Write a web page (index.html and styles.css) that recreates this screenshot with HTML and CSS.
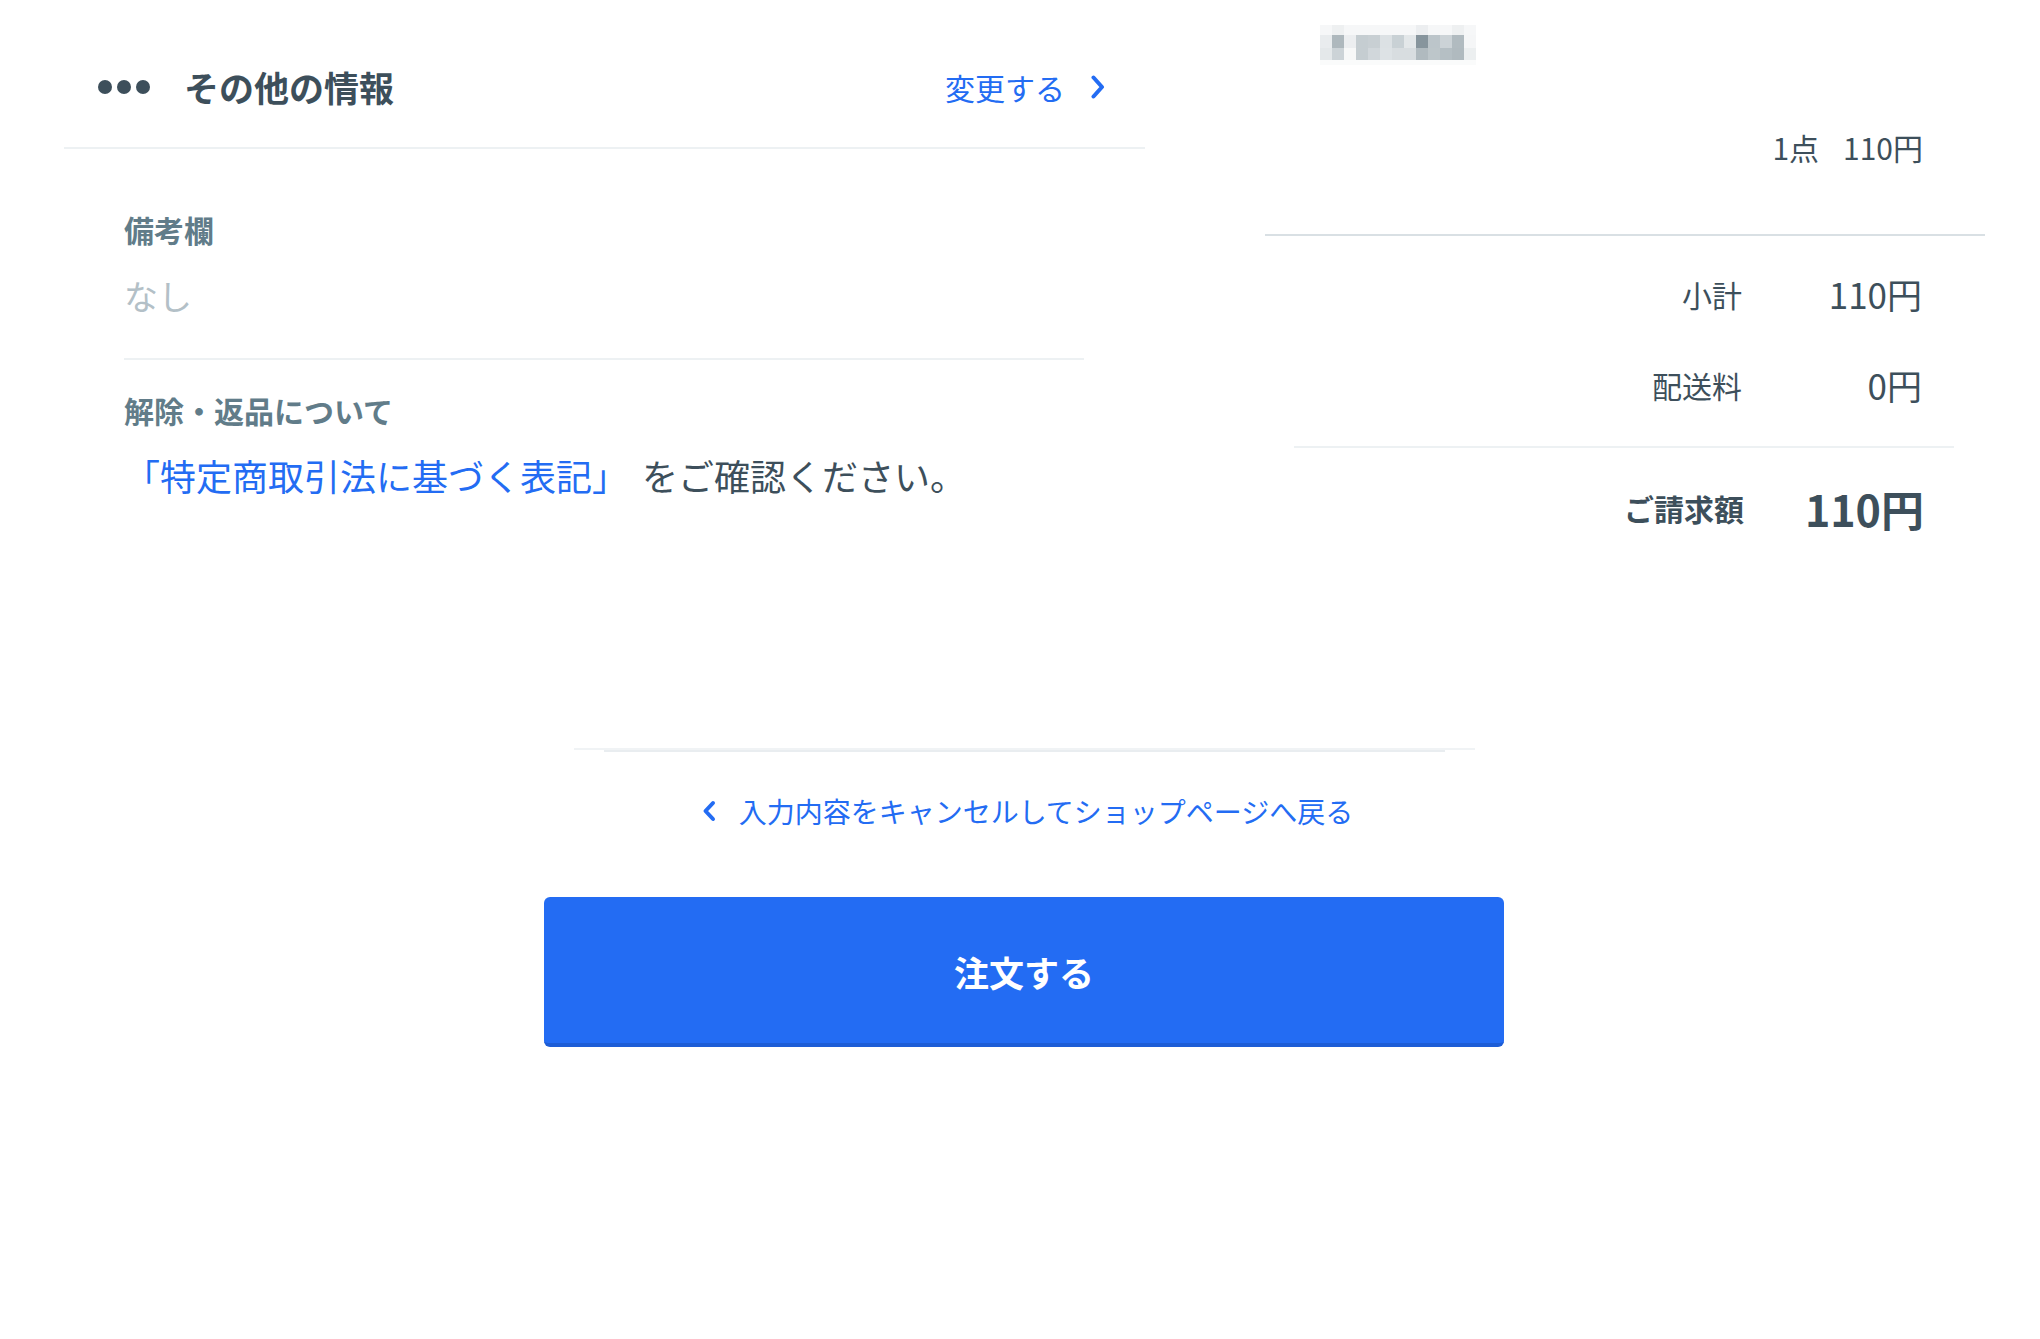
FILE: index.html
```html
<!DOCTYPE html>
<html lang="ja">
<head>
<meta charset="utf-8">
<title>注文確認</title>
<link rel="stylesheet" href="styles.css">
</head>
<body>
<div class="page">
  <div class="top">
    <section class="left">
      <header class="sec-head">
        <div class="head-title">
          <span class="dots"><i></i><i></i><i></i></span>
          <h2 class="title">その他の情報</h2>
        </div>
        <a class="change" href="#">変更する
          <svg class="chev-r" width="14" height="24" viewBox="0 0 14 24"><path d="M2.5 2.5 L11 12 L2.5 21.5" fill="none" stroke="#236cf3" stroke-width="4" stroke-linecap="round" stroke-linejoin="round"/></svg>
        </a>
      </header>
      <div class="sec-body">
        <div class="field">
          <div class="label">備考欄</div>
          <div class="empty">なし</div>
        </div>
        <div class="field field-last">
          <div class="label">解除・返品について</div>
          <p class="notice"><a class="law" href="#">「特定商取引法に基づく表記」</a>をご確認ください。</p>
        </div>
      </div>
    </section>
    <aside class="right">
      <div class="thumb">
        <svg width="156" height="40" viewBox="0 0 156 40">
          <g>
            <rect x="0" y="0" width="156" height="10" fill="#f6f7f8"/>
            <rect x="12" y="0" width="12" height="10" fill="#eef0f1"/>
            <rect x="96" y="0" width="12" height="10" fill="#eceef0"/>
            <rect x="132" y="0" width="12" height="10" fill="#eef0f1"/>
            <rect x="0" y="10" width="12" height="13" fill="#e9ecee"/>
            <rect x="12" y="10" width="12" height="13" fill="#aeb8bd"/>
            <rect x="24" y="10" width="12" height="13" fill="#eceef0"/>
            <rect x="36" y="10" width="12" height="13" fill="#c5cdd1"/>
            <rect x="48" y="10" width="12" height="13" fill="#c8cfd3"/>
            <rect x="60" y="10" width="12" height="13" fill="#dce1e4"/>
            <rect x="72" y="10" width="12" height="13" fill="#c9d1d5"/>
            <rect x="84" y="10" width="12" height="13" fill="#e3e7e9"/>
            <rect x="96" y="10" width="12" height="13" fill="#87959d"/>
            <rect x="108" y="10" width="12" height="13" fill="#bcc5ca"/>
            <rect x="120" y="10" width="12" height="13" fill="#ccd3d7"/>
            <rect x="132" y="10" width="12" height="13" fill="#b1bbc0"/>
            <rect x="144" y="10" width="12" height="13" fill="#f5f6f7"/>
            <rect x="0" y="23" width="12" height="12" fill="#e4e8ea"/>
            <rect x="12" y="23" width="12" height="12" fill="#ccd3d7"/>
            <rect x="24" y="23" width="12" height="12" fill="#f7f8f8"/>
            <rect x="36" y="23" width="12" height="12" fill="#c5cdd1"/>
            <rect x="48" y="23" width="12" height="12" fill="#d1d7db"/>
            <rect x="60" y="23" width="12" height="12" fill="#dde2e5"/>
            <rect x="72" y="23" width="12" height="12" fill="#d8dde0"/>
            <rect x="84" y="23" width="12" height="12" fill="#d8dde0"/>
            <rect x="96" y="23" width="12" height="12" fill="#b0babf"/>
            <rect x="108" y="23" width="12" height="12" fill="#bdc6ca"/>
            <rect x="120" y="23" width="12" height="12" fill="#b5bfc4"/>
            <rect x="132" y="23" width="12" height="12" fill="#b0babf"/>
            <rect x="144" y="23" width="12" height="12" fill="#eceff0"/>
            <rect x="0" y="35" width="156" height="5" fill="#fafbfb"/>
          </g>
        </svg>
      </div>
      <div class="qty"><span>1点</span><span>110円</span></div>
      <div class="rows">
        <div class="row"><span class="k">小計</span><span class="v">110円</span></div>
        <div class="row row2"><span class="k">配送料</span><span class="v">0円</span></div>
      </div>
      <div class="row total"><span class="k">ご請求額</span><span class="v">110円</span></div>
    </aside>
  </div>
  <div class="bottom">
    <div class="rule"></div>
    <a class="back" href="#">
      <svg class="chev-l" width="16" height="22" viewBox="0 0 16 22"><path d="M12 3 L4.5 11 L12 19" fill="none" stroke="#236cf3" stroke-width="4" stroke-linecap="round" stroke-linejoin="round"/></svg>
      入力内容をキャンセルしてショップページへ戻る
    </a>
    <button class="order" type="button">注文する</button>
  </div>
</div>
</body>
</html>
```

FILE: styles.css
```css
* { box-sizing: border-box; }
html, body { margin: 0; padding: 0; background: #ffffff; }
body {
  font-family: "Noto Sans CJK JP", "Noto Sans", sans-serif;
  color: #3d4f5b;
  width: 2040px;
  height: 1339px;
  overflow: hidden;
}
a { text-decoration: none; }

.top {
  display: flex;
  align-items: flex-start;
  padding-left: 64px;
}

/* ---------- left column ---------- */
.left {
  width: 1081px;
}
.sec-head {
  display: flex;
  align-items: center;
  justify-content: space-between;
  height: 149px;
  padding: 60px 40px 33px 34px;
  border-bottom: 2px solid #edf1f3;
}
.head-title {
  display: flex;
  align-items: center;
  gap: 34px;
}
.dots {
  display: flex;
  gap: 5px;
}
.dots i {
  display: block;
  width: 14px;
  height: 14px;
  border-radius: 50%;
  background: #3d4f5b;
}
.title {
  margin: 0;
  font-size: 35px;
  line-height: 54px;
  font-weight: 700;
  color: #3d4f5b;
}
.change {
  display: flex;
  align-items: center;
  gap: 26px;
  font-size: 30px;
  line-height: 54px;
  color: #236cf3;
}
.sec-body {
  padding: 0 61px 0 60px;
}
.field {
  padding-top: 60px;
  padding-bottom: 40px;
  border-bottom: 2px solid #edf1f3;
}
.field-last {
  padding-top: 30px;
  border-bottom: none;
  padding-bottom: 0;
}
.label {
  font-size: 30px;
  line-height: 40px;
  font-weight: 700;
  color: #617c89;
}
.empty {
  margin-top: 25px;
  font-size: 34px;
  line-height: 44px;
  color: #b3c0c7;
}
.notice {
  margin: 21px 0 0;
  font-size: 36px;
  line-height: 48px;
  color: #3d4f5b;
  white-space: nowrap;
}
.law {
  color: #236cf3;
  margin-right: 14px;
}

/* ---------- right column ---------- */
.right {
  width: 720px;
  margin-left: 120px;
  padding-top: 25px;
}
.thumb {
  margin-left: 55px;
  height: 40px;
}
.thumb svg { display: block; }
.qty {
  display: flex;
  justify-content: flex-end;
  gap: 24px;
  margin-top: 62px;
  padding-right: 62px;
  font-size: 30px;
  line-height: 40px;
  color: #3d4f5b;
  padding-bottom: 67px;
  border-bottom: 2px solid #d9e0e4;
}
.rows {
  margin: 0 31px 0 29px;
  padding-top: 36px;
  padding-bottom: 39px;
  border-bottom: 2px solid #edf1f3;
}
.row {
  display: flex;
  justify-content: flex-end;
  align-items: center;
  padding-right: 61px;
  font-size: 30px;
  line-height: 44px;
  color: #3d4f5b;
}
.rows .row { padding-right: 32px; }
.row2 { margin-top: 47px; }
.row .k {
  text-align: right;
}
.row .v {
  width: 180px;
  text-align: right;
  font-size: 35px;
}
.total {
  margin-top: 34px;
  line-height: 52px;
}
.total .k {
  font-weight: 700;
  font-size: 30px;
}
.total .v {
  font-weight: 700;
  font-size: 43px;
}

/* ---------- bottom ---------- */
.bottom {
  display: flex;
  flex-direction: column;
  align-items: center;
  padding-left: 8px;
  margin-top: 214px;
}
.rule {
  position: relative;
  width: 901px;
  height: 4px;
  border-top: 2px solid #f0f3f5;
}
.rule::after {
  content: "";
  position: absolute;
  left: 30px;
  right: 30px;
  top: 0;
  height: 2px;
  background: #e9edf0;
}
.back {
  display: flex;
  align-items: center;
  gap: 22px;
  margin-top: 39px;
  font-size: 28px;
  line-height: 40px;
  color: #236cf3;
  padding-left: 6px;
}
.chev-l { display: block; }
.chev-r { display: block; }
.order {
  margin-top: 66px;
  width: 960px;
  height: 150px;
  border: none;
  border-bottom: 4px solid #1d5dd6;
  border-radius: 6px;
  background: #236cf3;
  color: #ffffff;
  font-family: "Noto Sans CJK JP", "Noto Sans", sans-serif;
  font-size: 35px;
  font-weight: 700;
  padding-top: 4px;
  cursor: pointer;
}
```
